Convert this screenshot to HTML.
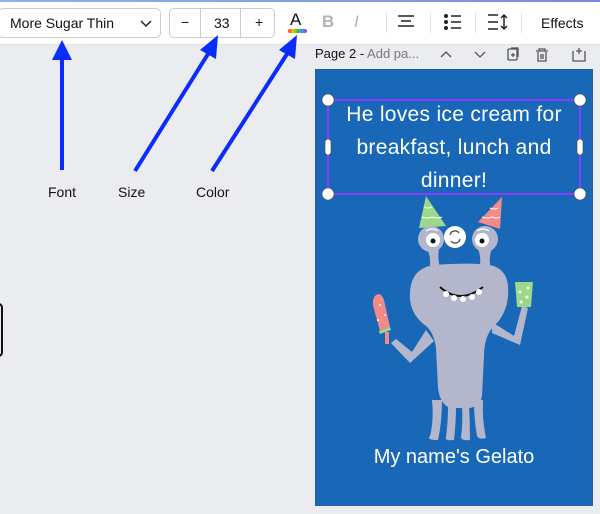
<!DOCTYPE html>
<html><head><meta charset="utf-8"><style>
*{margin:0;padding:0;box-sizing:border-box}
body{width:600px;height:514px;overflow:hidden;background:#ebecf0;font-family:"Liberation Sans",sans-serif;position:relative}
.tb{position:absolute;left:0;top:0;width:600px;height:45px;background:#fff;border-bottom:1px solid #dfe1e5}
.topline{position:absolute;left:0;top:0;width:600px;height:2px;background:linear-gradient(90deg,#8fb4e8,#7a8ae0)}
.box{position:absolute;border:1px solid #c9ccd1;border-radius:5px;background:#fff;font-size:14px;color:#111}
.abs{position:absolute}
.lbl{position:absolute;font-size:14px;color:#111}
</style></head><body>
<div class="tb">
<div class="topline"></div>
<div class="box" style="left:-2px;top:8px;width:163px;height:30px"><span class="abs" style="left:11px;top:6px">More Sugar Thin</span>
<svg class="abs" style="left:141px;top:11px" width="12" height="8"><path d="M1 1l5 5 5-5" fill="none" stroke="#222" stroke-width="1.5"/></svg></div>
<div class="box" style="left:169px;top:8px;width:106px;height:30px">
<span class="abs" style="left:11px;top:5px">−</span>
<div class="abs" style="left:30px;top:0;width:1px;height:28px;background:#c9ccd1"></div>
<span class="abs" style="left:44px;top:6px">33</span>
<div class="abs" style="left:70px;top:0;width:1px;height:28px;background:#c9ccd1"></div>
<span class="abs" style="left:85px;top:5px">+</span></div>
<span class="abs" style="left:290px;top:10px;font-size:17px;color:#111">A</span>
<div class="abs" style="left:288px;top:29px;width:19px;height:4px;border-radius:2px;background:linear-gradient(90deg,#f33,#fb0,#3c3,#39f,#93f)"></div>
<span class="abs" style="left:322px;top:12px;font-size:17px;font-weight:bold;color:#b0b3b8">B</span>
<span class="abs" style="left:354px;top:12px;font-size:17px;font-style:italic;color:#b0b3b8">I</span>
<div class="abs" style="left:386px;top:13px;width:1px;height:20px;background:#dfe1e5"></div>
<svg class="abs" style="left:396px;top:14px" width="20" height="16"><path d="M2 2h16M5 7h10M2 12h16" stroke="#222" stroke-width="1.6"/></svg>
<div class="abs" style="left:430px;top:13px;width:1px;height:20px;background:#dfe1e5"></div>
<svg class="abs" style="left:443px;top:13px" width="20" height="18"><circle cx="3" cy="3" r="2" fill="#222"/><circle cx="3" cy="9" r="2" fill="#222"/><circle cx="3" cy="15" r="2" fill="#222"/><path d="M8 3h10M8 9h10M8 15h10" stroke="#222" stroke-width="1.6"/></svg>
<div class="abs" style="left:475px;top:13px;width:1px;height:20px;background:#dfe1e5"></div>
<svg class="abs" style="left:487px;top:13px" width="24" height="18"><path d="M1 2h10M1 9h10M1 16h10M17 2v14M14 5l3-3 3 3M14 13l3 3 3-3" fill="none" stroke="#222" stroke-width="1.5"/></svg>
<div class="abs" style="left:521px;top:13px;width:1px;height:20px;background:#dfe1e5"></div>
<span class="abs" style="left:541px;top:15px;font-size:14px;color:#111">Effects</span>
</div>
<span class="abs" style="left:315px;top:46px;font-size:13px;color:#111">Page 2 - <span style="color:#777">Add pa...</span></span>
<svg class="abs" style="left:440px;top:47px" width="160" height="16" fill="none" stroke="#555" stroke-width="1.3">
<path d="M1 10l5-5 5 5"/><path d="M35 5l5 5 5-5"/>
<rect x="68" y="2" width="9" height="11" rx="1"/><path d="M71 1h7v9"/><path d="M73 6v4M71 8h4"/>
<path d="M96 4h12M99 4V2h6v2M98 5v9h8V5M101 7v5M103 7v5"/>
<path d="M133 4v10h12V4M139 1v6M136 4h6"/>
</svg>
<svg class="abs" style="left:0;top:0" width="310" height="180">
<g stroke="#0a2cff" stroke-width="4" fill="#0a2cff">
<line x1="62" y1="170" x2="62" y2="60"/><path d="M52 60l10-20 10 20z" stroke="none"/>
<line x1="135" y1="171" x2="208" y2="54"/><path d="M200 50l18-15-2 24z" stroke="none"/>
<line x1="212" y1="171" x2="287" y2="54"/><path d="M279 50l18-15-2 24z" stroke="none"/>
</g></svg>
<span class="lbl" style="left:48px;top:184px">Font</span>
<span class="lbl" style="left:118px;top:184px">Size</span>
<span class="lbl" style="left:196px;top:184px">Color</span>
<div class="abs" style="left:-6px;top:303px;width:9px;height:54px;border:2px solid #111;border-radius:5px"></div>
<div class="abs" style="left:315px;top:69px;width:278px;height:437px;background:#1868b7;border:1px solid #2a5fa8"></div>
<svg class="abs" style="left:0;top:0" width="600" height="514">
<path d="M419 228L426 196L446 226Z" fill="#9bd889"/>
<path d="M478 222L502 197L500 229Z" fill="#f28a8a"/>
<path d="M422 217q5 2 10 0q5 2 10 0M424 207q4 2 8 0" stroke="#fff" fill="none"/>
<path d="M482 217q5 2 10 0q5 2 8 0M490 208q4 2 8 0" stroke="#fff" fill="none"/>
<g fill="#b4b7cc">
<circle cx="431" cy="239" r="13"/><circle cx="485" cy="239" r="13"/>
<path d="M427 248q5 12 2 22h12q-4-10-2-22z"/><path d="M478 248q4 12 1 22h12q-3-10 1-22z"/>
<path d="M410 300q-2-32 25-35q25-2 45-1q26 0 28 22q2 25-14 40q-10 10-10 30l-2 40q-2 10-12 12h-20q-10-4-12-20l-2-40q-2-15-10-22q-14-10-16-26z"/>
<path d="M432 400q2 20 -2 36q-4 4 8 4q4-18 4-40zM448 405q0 18 -2 32q-2 4 8 3q2-17 2-35zM462 405q1 18 -1 32q0 4 9 3q0-18 -1-35zM474 400q0 20 3 36q2 4 9 2q-4-18 -3-38z"/>
<path d="M426 330l-14 22-16-13-5 4 19 20 24-22z"/>
<path d="M492 322l22 14 8-30 6 2-8 37-28-12z"/>
</g>
<circle cx="433" cy="240" r="7" fill="#fff"/><circle cx="433" cy="241" r="2.5" fill="#111"/>
<circle cx="482" cy="240" r="7" fill="#fff"/><circle cx="482" cy="241" r="2.5" fill="#111"/>
<path d="M426 231q6-4 12 0M477 231q6-4 12 0" stroke="#fff" fill="none" stroke-width="1.2"/>
<circle cx="455" cy="237" r="11" fill="#fff"/>
<path d="M450 235a5 5 0 0 1 9-2M460 239a5 5 0 0 1-9 2" stroke="#444" fill="none" stroke-width="1.2"/>
<path d="M440 287q20 18 43 0" stroke="#111" stroke-width="2" fill="none"/>
<g fill="#fff"><circle cx="446" cy="294" r="3"/><circle cx="454" cy="298" r="3"/><circle cx="463" cy="299" r="3"/><circle cx="472" cy="297" r="3"/><circle cx="479" cy="292" r="3"/></g>
<path d="M376 295q-5 4-2 14l6 22l10-4l-6-27q-3-8-8-5z" fill="#f28a8a"/>
<path d="M379 331l11-4 1 3-11 4z" fill="#9bd889"/>
<rect x="385" y="332" width="4" height="12" fill="#f28a8a"/>
<path d="M515 282h18l-2 25h-14z" fill="#9bd889"/>
<g fill="#fff"><circle cx="520" cy="292" r="1.5"/><circle cx="527" cy="297" r="1.5"/><circle cx="521" cy="302" r="1.5"/><circle cx="528" cy="288" r="1.5"/><circle cx="380" cy="305" r="1"/><circle cx="385" cy="315" r="1"/><circle cx="378" cy="320" r="1"/></g>
<rect x="328" y="100" width="252" height="94" fill="none" stroke="#8b3dff" stroke-width="2"/>
<g fill="#fff" stroke="#444" stroke-width="0.6"><circle cx="328" cy="100" r="6"/><circle cx="580" cy="100" r="6"/><circle cx="328" cy="194" r="6"/><circle cx="580" cy="194" r="6"/>
<rect x="325" y="139" width="6" height="16" rx="3"/><rect x="577" y="139" width="6" height="16" rx="3"/></g>
</svg>
<div class="abs" style="left:328px;top:98px;width:252px;text-align:center;color:#fff;font-family:'Liberation Sans',sans-serif;font-size:21px;line-height:33px;letter-spacing:0.3px">He loves ice cream for breakfast, lunch and dinner!</div>
<div class="abs" style="left:315px;top:446px;width:278px;text-align:center;color:#fff;font-size:20px">My name's Gelato</div>
</body></html>
